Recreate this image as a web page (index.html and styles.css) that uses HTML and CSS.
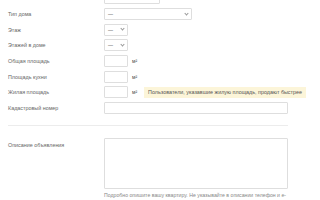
FILE: index.html
```html
<!DOCTYPE html>
<html lang="ru">

<head>
    <meta charset="UTF-8">
    <meta name="viewport" content="width=device-width, initial-scale=1.0">
    <link rel="stylesheet" href="styles.css">
</head>

<body>
    <div class="form">
        <div class="params">
            <div class="row">
                <div class="label">Количество комнат</div>
                <div class="field">
                    <div class="select w56"><span>—</span><i class="arrow"></i></div>
                </div>
            </div>
            <div class="row">
                <div class="label">Тип дома</div>
                <div class="field">
                    <div class="select w88"><span>—</span><i class="arrow"></i></div>
                </div>
            </div>
            <div class="row">
                <div class="label">Этаж</div>
                <div class="field">
                    <div class="select w24"><span>—</span><i class="arrow"></i></div>
                </div>
            </div>
            <div class="row">
                <div class="label">Этажей в доме</div>
                <div class="field">
                    <div class="select w24"><span>—</span><i class="arrow"></i></div>
                </div>
            </div>
            <div class="row">
                <div class="label">Общая площадь</div>
                <div class="field">
                    <div class="input w24"></div>
                    <span class="unit">м²</span>
                </div>
            </div>
            <div class="row">
                <div class="label">Площадь кухни</div>
                <div class="field">
                    <div class="input w24"></div>
                    <span class="unit">м²</span>
                </div>
            </div>
            <div class="row">
                <div class="label">Жилая площадь</div>
                <div class="field">
                    <div class="input w24"></div>
                    <span class="unit">м²</span>
                    <div class="tip">Пользователи, указавшие жилую площадь, продают быстрее</div>
                </div>
            </div>
            <div class="row">
                <div class="label">Кадастровый номер</div>
                <div class="field">
                    <div class="input w184"></div>
                </div>
            </div>
        </div>

        <div class="divider"></div>

        <div class="row desc">
            <div class="label">Описание объявления</div>
            <div class="field column">
                <div class="textarea"></div>
                <div class="hint">Подробно опишите вашу квартиру. Не указывайте в описании телефон и e-mail</div>
            </div>
        </div>
    </div>
</body>

</html>
```

FILE: styles.css
```css
body {
    margin: 0;
    background: #fff;
    font-family: "Liberation Sans", Arial, sans-serif;
    overflow: hidden;
}

.form {
    width: 280px;
    padding: 0 8px;
    margin-top: -7.7px;
}

.params {
    display: flex;
    flex-direction: column;
    gap: 3.7px;
}

.row {
    display: grid;
    grid-template-columns: 96px auto;
    align-items: center;
    height: 12px;
}

.label {
    font-size: 5.4px;
    color: #666;
    white-space: nowrap;
}

.field {
    display: flex;
    align-items: center;
    height: 100%;
}

.select,
.input,
.textarea {
    box-sizing: border-box;
    border: 1px solid #dedede;
    border-radius: 1px;
    background: #fff;
    height: 12px;
}

.select {
    display: flex;
    align-items: center;
    justify-content: space-between;
    padding: 0 3px;
    font-size: 5px;
    color: #444;
}

.arrow {
    width: 2px;
    height: 2px;
    border-right: 1px solid #999;
    border-bottom: 1px solid #999;
    transform: rotate(45deg);
    margin-top: -1.5px;
}

.w24 { width: 24px; }
.w56 { width: 56px; }
.w88 { width: 88px; }
.w184 { width: 184px; }

.unit {
    font-size: 5px;
    color: #444;
    margin-left: 4px;
}

.tip {
    margin-left: 7px;
    height: 11px;
    display: flex;
    align-items: center;
    padding: 0 4px;
    background: #fcf5d9;
    font-size: 5.4px;
    color: #555;
    white-space: nowrap;
}

.divider {
    height: 1px;
    background: #ececec;
    margin: 10.5px 0 12.5px;
}

.row.desc {
    height: auto;
    align-items: start;
}

.desc .label {
    padding-top: 4px;
}

.column {
    flex-direction: column;
    align-items: flex-start;
}

.textarea {
    width: 184px;
    height: 51px;
}

.hint {
    width: 184px;
    margin-top: 2.5px;
    font-size: 5.2px;
    line-height: 7px;
    color: #888;
}
```
